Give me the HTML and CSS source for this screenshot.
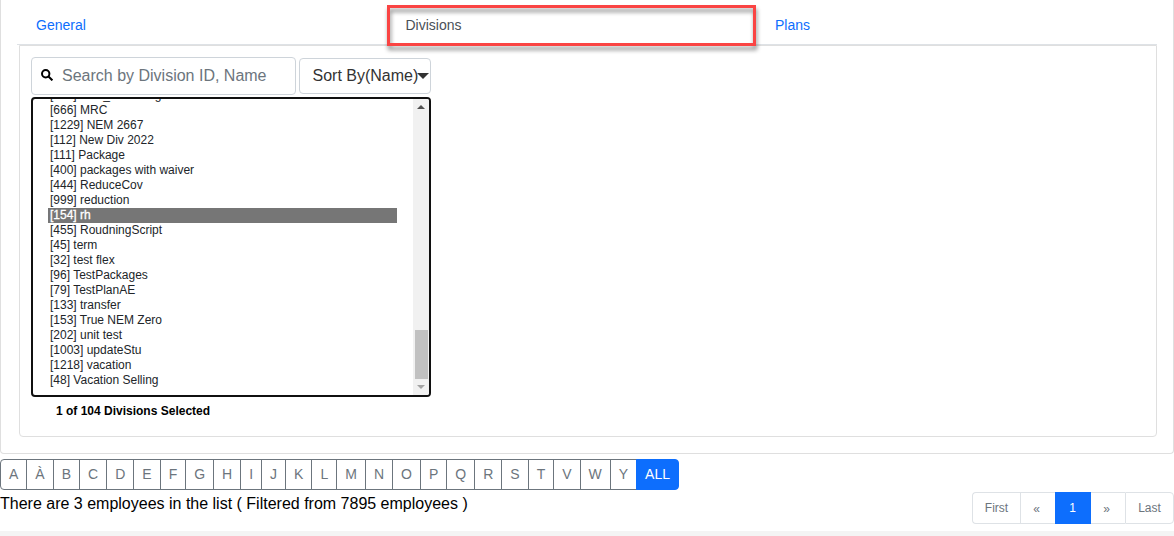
FILE: index.html
```html
<!DOCTYPE html>
<html lang="en">
<head>
<meta charset="utf-8">
<title>Divisions</title>
<link rel="stylesheet" href="styles.css">
</head>
<body>
<section class="card">
  <nav class="tabs">
    <a class="tab">General</a>
    <a class="tab active">Divisions</a>
    <a class="tab">Plans</a>
  </nav>
  <div class="panel">
    <div class="tools">
      <div class="search">
        <svg class="glass" viewBox="0 0 12 12"><circle cx="4.7" cy="4.7" r="3.7"/><path d="M7.5 7.5L11.4 11.4"/></svg>
        <span>Search by Division ID, Name</span>
      </div>
      <div class="sort">Sort By(Name)<svg class="caret" viewBox="0 0 12 6"><path d="M0 0H12L6 6Z"/></svg></div>
    </div>
    <div class="listbox">
      <ul class="options">
        <li>[155] Med_Rounding</li>
        <li>[666] MRC</li>
        <li>[1229] NEM 2667</li>
        <li>[112] New Div 2022</li>
        <li>[111] Package</li>
        <li>[400] packages with waiver</li>
        <li>[444] ReduceCov</li>
        <li>[999] reduction</li>
        <li class="selected">[154] rh</li>
        <li>[455] RoudningScript</li>
        <li>[45] term</li>
        <li>[32] test flex</li>
        <li>[96] TestPackages</li>
        <li>[79] TestPlanAE</li>
        <li>[133] transfer</li>
        <li>[153] True NEM Zero</li>
        <li>[202] unit test</li>
        <li>[1003] updateStu</li>
        <li>[1218] vacation</li>
        <li>[48] Vacation Selling</li>
      </ul>
      <div class="scrollbar">
        <svg class="arrow" viewBox="0 0 8 4"><path d="M0 4L4 0L8 4Z"/></svg>
        <div class="thumb"></div>
        <svg class="arrow down" viewBox="0 0 8 4"><path d="M0 0H8L4 4Z"/></svg>
      </div>
    </div>
    <div class="count">1 of 104 Divisions Selected</div>
  </div>
</section>
<div class="letters">
  <a>A</a><a>À</a><a>B</a><a>C</a><a>D</a><a>E</a><a>F</a><a>G</a><a>H</a><a>I</a><a>J</a><a>K</a><a>L</a><a>M</a><a>N</a><a>O</a><a>P</a><a>Q</a><a>R</a><a>S</a><a>T</a><a>V</a><a>W</a><a>Y</a><a class="on">ALL</a>
</div>
<footer class="footer">
  <div class="summary">There are 3 employees in the list ( Filtered from 7895 employees )</div>
  <div class="pages"><a>First</a><a class="step">«</a><a class="on">1</a><a class="step">»</a><a>Last</a></div>
</footer>
</body>
</html>
```
FILE: styles.css
```css
* { box-sizing: border-box; }
html { background: #f4f4f4; }
body {
  margin: 0;
  height: 531px;
  overflow: hidden;
  background: #fff;
  color: #000;
  font: 16px/24px "Liberation Sans", Arial, sans-serif;
}
.card {
  height: 454px;
  border: 1px solid #dfdfdf;
  border-top: 0;
  border-radius: 0 0 4px 4px;
  padding: 5px 16px 0;
}
.tabs {
  display: grid;
  grid-template-columns: 369.5px 369.5px 1fr;
  height: 40px;
  border-bottom: 1px solid #dee2e6;
}
.tab {
  padding: 8px 19px;
  font-size: 14px;
  color: #0d6efd;
}
.tab.active {
  position: relative;
  color: #495057;
}
/* highlight frame drawn over the active tab */
.tab.active::after {
  content: "";
  position: absolute;
  inset: 0 0 -1px 0;
  border: 3px solid #fa4443;
  filter: drop-shadow(1px 4px 2px rgba(0, 0, 0, .45));
}
.panel {
  height: 392px;
  margin-left: 2px;
  border: 1px solid #dfdfdf;
  border-radius: 0 0 4px 4px;
  padding: 11px;
}
.tools { display: flex; gap: 3px; height: 40px; }
.search {
  display: flex;
  align-items: center;
  width: 265px;
  height: 38px;
  padding-left: 9px;
  border: 1px solid #ced4da;
  border-radius: 4px;
  color: #6c757d;
}
.glass {
  width: 12px;
  height: 12px;
  margin: -3px 9px 0 0;
  fill: none;
  stroke: #000;
  stroke-width: 2;
}
.sort {
  display: flex;
  align-items: center;
  width: 132px;
  height: 36px;
  margin-top: 1px;
  padding-left: 12.5px;
  border: 1px solid #ced4da;
  border-radius: 4px;
  color: #333;
}
.caret { flex: none; width: 12px; height: 6px; margin-left: -1.5px; fill: #333; }
.listbox {
  display: flex;
  justify-content: space-between;
  width: 400px;
  height: 300px;
  border: 2px solid #101010;
  border-radius: 4px;
  overflow: hidden;
}
.options {
  width: 349px;
  margin: -11px 0 0 15px;
  padding: 0;
  list-style: none;
  font-size: 12px;
  line-height: 15px;
  color: #212529;
}
.options li { height: 15px; padding-left: 2px; }
.options .selected { background: #767676; color: #fff; -webkit-text-stroke: .3px #fff; }
.scrollbar {
  display: flex;
  flex-direction: column;
  align-items: center;
  width: 16px;
  padding: 6px 0;
  background: #f1f1f1;
}
.arrow { width: 8px; height: 4px; fill: #505050; }
.arrow.down { margin-top: 6px; fill: #a3a3a3; }
.thumb { width: 13px; height: 49px; margin-top: 221px; background: #c1c1c1; }
.count { padding: 2px 25px; font-size: 12px; font-weight: 700; }
.letters { display: flex; height: 31px; margin-top: 5px; }
.letters a {
  padding: 4px 8px;
  margin-left: -1px;
  border: 1px solid #6c757d;
  font-size: 14px;
  line-height: 21px;
  color: #6c757d;
}
.letters a:first-child { margin-left: 0; border-radius: 4px 0 0 4px; }
.letters a:last-child { border-radius: 0 4px 4px 0; }
.letters .on, .pages .on { background: #0d6efd; border-color: #0d6efd; color: #fff; }
.footer { display: flex; justify-content: space-between; padding-top: 2px; }
.pages {
  display: grid;
  grid-template-columns: 48px 35px 36px 34px 49px;
  grid-template-rows: 32px;
  height: 32px;
  font-size: 12px;
  line-height: 30px;
  text-align: center;
  color: #6c757d;
}
.pages a { border: 1px solid #dee2e6; border-right: 0; }
.pages a:first-child { border-radius: 4px 0 0 4px; }
.pages a:last-child { border-right: 1px solid #dee2e6; border-radius: 0 4px 4px 0; }
.pages .on + a { border-left: 0; }
.pages .step { padding-right: 3px; line-height: 32px; }
.pages .on { padding-right: 2px; }
```
